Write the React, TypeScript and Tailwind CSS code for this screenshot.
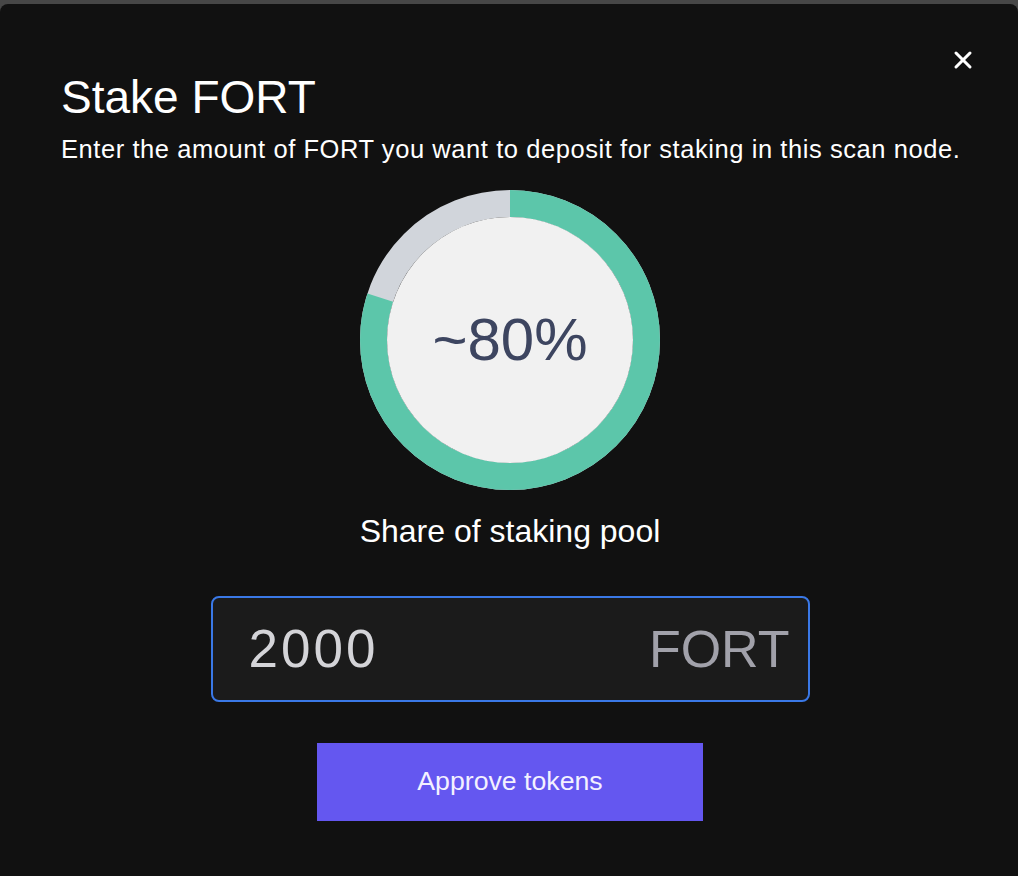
import { FC } from 'react'
import { X } from 'lucide-react'

const ShareRing: FC<{ percent: number }> = ({ percent }) => {
  const r = 136.5
  const c = 2 * Math.PI * r
  return (
    <div className="relative w-[300px] h-[300px]">
      <svg width={300} height={300} viewBox="0 0 300 300" className="block">
        <circle cx={150} cy={150} r={r} fill="none" stroke="#d1d5db" strokeWidth={27} />
        <circle
          cx={150}
          cy={150}
          r={r}
          fill="none"
          stroke="#5cc6aa"
          strokeWidth={27}
          strokeDasharray={`${(c * percent) / 100} ${c}`}
          transform="rotate(-90 150 150)"
        />
        <circle cx={150} cy={150} r={123} fill="#f1f1f1" />
      </svg>
      <div className="absolute inset-0 flex items-center justify-center text-[60px] leading-none text-[#3d4560]">
        ~{percent}%
      </div>
    </div>
  )
}

const App: FC = () => {
  return (
    <div
      className="w-[1018px] h-[876px] bg-[#474747] pt-[4px] overflow-hidden"
      style={{ fontFamily: '"Liberation Sans", Arial, sans-serif' }}
    >
      <div className="relative h-[872px] bg-[#111111] rounded-t-lg flex flex-col">
        <button className="absolute top-[42px] right-[41px] text-white">
          <X className="w-[28px] h-[28px]" strokeWidth={2.6} />
        </button>
        <div className="pl-[61px] pt-[70px]">
          <h1 className="text-[46px] leading-none text-white">Stake FORT</h1>
          <p className="mt-[17px] text-[25.5px] tracking-[0.57px] leading-none text-white">
            Enter the amount of FORT you want to deposit for staking in this scan node.
          </p>
        </div>
        <div className="flex flex-col items-center pl-[2px]">
          <div className="mt-[27px]">
            <ShareRing percent={80} />
          </div>
          <p className="mt-[25px] text-[32px] leading-none text-white">Share of staking pool</p>
          <div className="mt-[49px] w-[599px] h-[106px] rounded-lg border-2 border-[#3a78e6] bg-[#1b1b1b] flex items-center justify-between pl-[36px] pr-[18px]">
            <span className="text-[53px] tracking-[3px] leading-none text-[#d4d4d8]">2000</span>
            <span className="text-[52px] leading-none text-[#a1a1aa]">FORT</span>
          </div>
          <button className="mt-[41px] w-[386px] h-[78px] bg-[#6457f0] text-[26.7px] text-[#f3f1ff]">
            Approve tokens
          </button>
        </div>
      </div>
    </div>
  )
}
export default App
